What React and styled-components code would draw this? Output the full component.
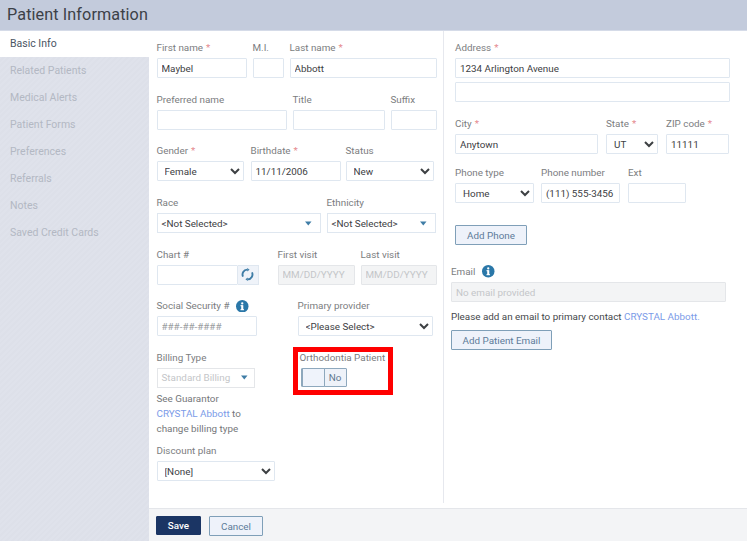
import React from "react";
import styled, { createGlobalStyle } from "styled-components";

const Global = createGlobalStyle`
  html, body { margin: 0; padding: 0; height: 100%; background: #fff; }
  body { font-family: Roboto, "Liberation Sans", sans-serif; font-size: 9.85px; color: #444; }
  #root { height: 541px; width: 747px; overflow: hidden; }
  * { box-sizing: border-box; }
`;

const Page = styled.div`
  display: grid;
  grid-template-rows: 31px 1fr;
  height: 541px;
`;
const Header = styled.header`
  background: #c3cbdc;
  border-bottom: 1px solid #d5dbe8;
  color: #3c4147;
  font-size: 16.2px;
  line-height: 29px;
  padding-left: 7px;
  letter-spacing: 0.1px;
`;
const Body = styled.div`
  display: grid;
  grid-template-columns: 149px 1fr;
  min-height: 0;
`;
const Sidebar = styled.nav`
  background: repeating-linear-gradient(135deg, #dde0e9 0 2px, #dfe2eb 2px 4px);
  display: flex;
  flex-direction: column;
`;
const NavItem = styled.div`
  height: ${p => (p.$active ? 26 : 27)}px;
  line-height: ${p => (p.$active ? 26 : 28)}px;
  padding-left: 10px;
  font-size: 10.5px;
  color: ${p => (p.$active ? "#4a5563" : "#b3b8c3")};
  background: ${p => (p.$active ? "#fff" : "transparent")};
`;
const Main = styled.main`
  display: grid;
  grid-template-rows: 1fr 33px;
  min-height: 0;
`;
const Columns = styled.div`
  display: grid;
  grid-template-columns: 295px 1fr;
  min-height: 0;
`;
const LeftCol = styled.section`
  padding: 8.3px 0 0 7.5px;
  margin-bottom: 5px;
  border-right: 1px solid #e6e8ee;
  display: flex;
  flex-direction: column;
  gap: 12.6px;
`;
const RightCol = styled.section`
  padding: 8px 0 0 1px;
  display: flex;
  flex-direction: column;
`;
const Row = styled.div`
  display: flex;
  align-items: flex-start;
  gap: ${p => p.$gap || 6}px;
  padding-left: ${p => p.$indent || 0}px;
  margin-top: ${p => p.$top || 0}px;
`;
const Field = styled.div`
  display: flex;
  flex-direction: column;
  position: relative;
  width: ${p => p.$w}px;
  margin-left: ${p => p.$ml || 0}px;
`;
const Label = styled.label`
  display: flex;
  align-items: center;
  height: 16px;
  padding-top: 1px;
  margin-bottom: 3px;
  color: #7b7d80;
  white-space: nowrap;
`;
const Req = styled.span`
  color: #e58a8f;
  margin-left: 3px;
`;
const Input = styled.input`
  width: 100%;
  height: 20px;
  border: 1px solid ${p => (p.disabled ? "#e4e6e9" : "#dfe7f0")};
  background: ${p => (p.disabled ? "#f3f4f5" : "#fff")};
  border-radius: 1px;
  font: inherit;
  color: #3d4043;
  padding: 0 4px;
  outline: none;
  &::placeholder { color: ${p => (p.disabled ? "#c4c6c9" : "#9a9ca0")}; opacity: 1; }
`;
const Select = styled.select`
  width: 100%;
  height: 20px;
  border: 1px solid #dfe7f0;
  background: #fff;
  border-radius: 1px;
  font: inherit;
  color: #3d4043;
  padding: 0 0 0 3px;
  outline: none;
`;
const Combo = styled.div`
  height: 20px;
  border: 1px solid ${p => (p.$disabled ? "#e4e6e9" : "#dfe7f0")};
  display: flex;
  align-items: center;
  justify-content: space-between;
  padding: 0 ${p => (p.$disabled ? 6 : 8)}px 0 4px;
  color: #3d4043;
`;
const ComboText = styled.span`
  color: ${p => (p.$disabled ? "#c4c6c9" : "#3d4043")};
  white-space: nowrap;
`;
const ComboWrap = styled.div`
  display: flex;
  width: 100%;
`;
const Spin = styled.button`
  flex: none;
  width: 21px;
  height: 20px;
  border: 1px solid #dfe7f0;
  border-left: 0;
  background: #eff3f9;
  padding: 0;
  display: flex;
  align-items: center;
  justify-content: center;
`;
const InlineInfo = styled.svg`
  width: 12.5px;
  height: 12.5px;
  margin-left: 7px;
`;
const Note = styled.div`
  margin: 3px 0 -6px;
  line-height: 15px;
  color: #75777a;
`;
const Link = styled.a`
  color: #7b9be8;
  text-decoration: none;
`;
const ToggleBox = styled.div`
  display: flex;
  width: 46px;
  height: 19px;
  margin-left: 1px;
  border: 1px solid #8ea8bd;
  border-radius: 1px;
  background: #eef2f9;
`;
const ToggleKnob = styled.div`
  width: 23px;
  margin: -1px 0;
  border: 1px solid #8ea8bd;
  border-bottom-width: 1.5px;
  border-radius: 1px;
  background: #eff3fb;
`;
const ToggleText = styled.div`
  flex: 1;
  text-align: center;
  line-height: 17px;
  color: #5e7890;
`;
const Highlight = styled.div`
  position: absolute;
  left: -7px;
  top: -2px;
  width: 100px;
  height: 48px;
  border: 5px solid #f00;
  pointer-events: none;
`;
const GhostButton = styled.button`
  height: 20px;
  width: ${p => p.$w}px;
  border: 1px solid #7f9fb8;
  border-bottom-width: 1.5px;
  border-radius: 1px;
  background: #eef2fa;
  color: #5d7b99;
  font: inherit;
  padding: 0;
`;
const PrimaryButton = styled.button`
  height: 19px;
  width: 45px;
  border: 1px solid #1b3564;
  border-radius: 1px;
  background: #1b3564;
  color: #fff;
  font: inherit;
  font-weight: 500;
  padding: 0;
`;
const Footer = styled.footer`
  background: #f3f4f6;
  border-top: 1px solid #e4e6ea;
  display: flex;
  gap: 8px;
  padding: 7px 0 0 7px;
`;
const EmailText = styled.div`
  margin-top: 7px;
  height: 16px;
  line-height: 16px;
  color: #45474a;
  white-space: nowrap;
`;

const R = () => <Req>*</Req>;

const Info = () => (
  <InlineInfo viewBox="0 0 12 12" aria-hidden="true">
    <circle cx="6" cy="6" r="6" fill="#2a77a8" />
    <rect x="5" y="5" width="2" height="4.6" fill="#fff" />
    <rect x="4.3" y="5" width="2" height="1" fill="#fff" />
    <rect x="4.3" y="8.8" width="3.4" height="1" fill="#fff" />
    <circle cx="6" cy="3.3" r="1.1" fill="#fff" />
  </InlineInfo>
);

const Tri = () => (
  <svg width="7" height="5" viewBox="0 0 7 5" aria-hidden="true">
    <path d="M0 0.5h6.5L3.25 4.5z" fill="#3f7da6" />
  </svg>
);

const Refresh = () => (
  <svg width="13" height="13" viewBox="0 0 13 13" fill="none" aria-hidden="true">
    <path d="M2 8.7A5 5 0 0 1 6.2 1.6" stroke="#3f7da6" strokeWidth="1.9" />
    <path d="M11 4.3A5 5 0 0 1 6.8 11.4" stroke="#3f7da6" strokeWidth="1.9" />
    <path d="M6.2 0l2.4 1.7-2.4 1.7zM6.8 9.6L4.4 11.3l2.4 1.7z" fill="#3f7da6" />
  </svg>
);

const TextField = ({ w, ml, label, req, info, ...rest }) => (
  <Field $w={w} $ml={ml}>
    <Label>{label}{req && <R />}{info && <Info />}</Label>
    <Input readOnly {...rest} />
  </Field>
);

const SelectField = ({ w, ml, label, req, value }) => (
  <Field $w={w} $ml={ml}>
    <Label>{label}{req && <R />}</Label>
    <Select defaultValue={value}><option>{value}</option></Select>
  </Field>
);

const ComboField = ({ w, ml, label, value, disabled, children }) => (
  <Field $w={w} $ml={ml}>
    <Label>{label}</Label>
    <Combo $disabled={disabled}>
      <ComboText $disabled={disabled}>{value}</ComboText>
      <Tri />
    </Combo>
    {children}
  </Field>
);

const navItems = ["Basic Info", "Related Patients", "Medical Alerts", "Patient Forms", "Preferences", "Referrals", "Notes", "Saved Credit Cards"];

export default function App() {
  return (
    <Page>
      <Global />
      <Header>Patient Information</Header>
      <Body>
        <Sidebar>
          {navItems.map((n, i) => <NavItem key={n} $active={i === 0}>{n}</NavItem>)}
        </Sidebar>
        <Main>
          <Columns>
            <LeftCol>
              <Row>
                <TextField w={90} label="First name" req value="Maybel" />
                <TextField w={31} label="M.I." value="" />
                <TextField w={147} label="Last name" req value="Abbott" />
              </Row>
              <Row>
                <TextField w={130} label="Preferred name" value="" />
                <TextField w={92} label="Title" value="" />
                <TextField w={46} label="Suffix" value="" />
              </Row>
              <Row $gap={7}>
                <SelectField w={87} label="Gender" req value="Female" />
                <TextField w={90} label="Birthdate" req value="11/11/2006" />
                <SelectField w={88} ml={-2} label="Status" value="New" />
              </Row>
              <Row>
                <ComboField w={164} label="Race" value="<Not Selected>" />
                <ComboField w={109} label="Ethnicity" value="<Not Selected>" />
              </Row>
              <Row>
                <Field $w={102}>
                  <Label>Chart #</Label>
                  <ComboWrap>
                    <Input readOnly value="" />
                    <Spin type="button" aria-label="Generate"><Refresh /></Spin>
                  </ComboWrap>
                </Field>
                <TextField w={77} ml={13} label="First visit" disabled placeholder="MM/DD/YYYY" />
                <TextField w={76} label="Last visit" disabled placeholder="MM/DD/YYYY" />
              </Row>
              <Row>
                <TextField w={100} label="Social Security #" info placeholder="###-##-####" />
                <SelectField w={135} ml={35} label="Primary provider" value="<Please Select>" />
              </Row>
              <Row>
                <ComboField w={98} label="Billing Type" value="Standard Billing" disabled>
                  <Note>See Guarantor<br /><Link>CRYSTAL Abbott</Link> to<br />change billing type</Note>
                </ComboField>
                <Field $w={100} $ml={39}>
                  <Highlight />
                  <Label>Orthodontia Patient</Label>
                  <ToggleBox>
                    <ToggleKnob />
                    <ToggleText>No</ToggleText>
                  </ToggleBox>
                </Field>
              </Row>
              <SelectField w={118} label="Discount plan" value="[None]" />
            </LeftCol>
            <RightCol>
              <Row $indent={10}>
                <TextField w={275} label="Address" req value="1234 Arlington Avenue" />
              </Row>
              <Row $indent={10} $top={4}>
                <Field $w={275}><Input readOnly value="" /></Field>
              </Row>
              <Row $indent={10} $gap={8} $top={13}>
                <TextField w={143} label="City" req value="Anytown" />
                <SelectField w={52} label="State" req value="UT" />
                <TextField w={63} label="ZIP code" req value="11111" />
              </Row>
              <Row $indent={10} $gap={7} $top={10}>
                <SelectField w={79} label="Phone type" value="Home" />
                <TextField w={79} label="Phone number" value="(111) 555-3456" />
                <TextField w={58} ml={1} label="Ext" value="" />
              </Row>
              <Row $indent={10} $top={22}>
                <GhostButton type="button" $w={72}>Add Phone</GhostButton>
              </Row>
              <Row $indent={6} $top={18}>
                <TextField w={275} label="Email" info disabled placeholder="No email provided" />
              </Row>
              <Row $indent={6}>
                <EmailText>Please add an email to primary contact <Link>CRYSTAL Abbott.</Link></EmailText>
              </Row>
              <Row $indent={6} $top={5}>
                <GhostButton type="button" $w={101}>Add Patient Email</GhostButton>
              </Row>
            </RightCol>
          </Columns>
          <Footer>
            <PrimaryButton type="button">Save</PrimaryButton>
            <GhostButton type="button" $w={54}>Cancel</GhostButton>
          </Footer>
        </Main>
      </Body>
    </Page>
  );
}
